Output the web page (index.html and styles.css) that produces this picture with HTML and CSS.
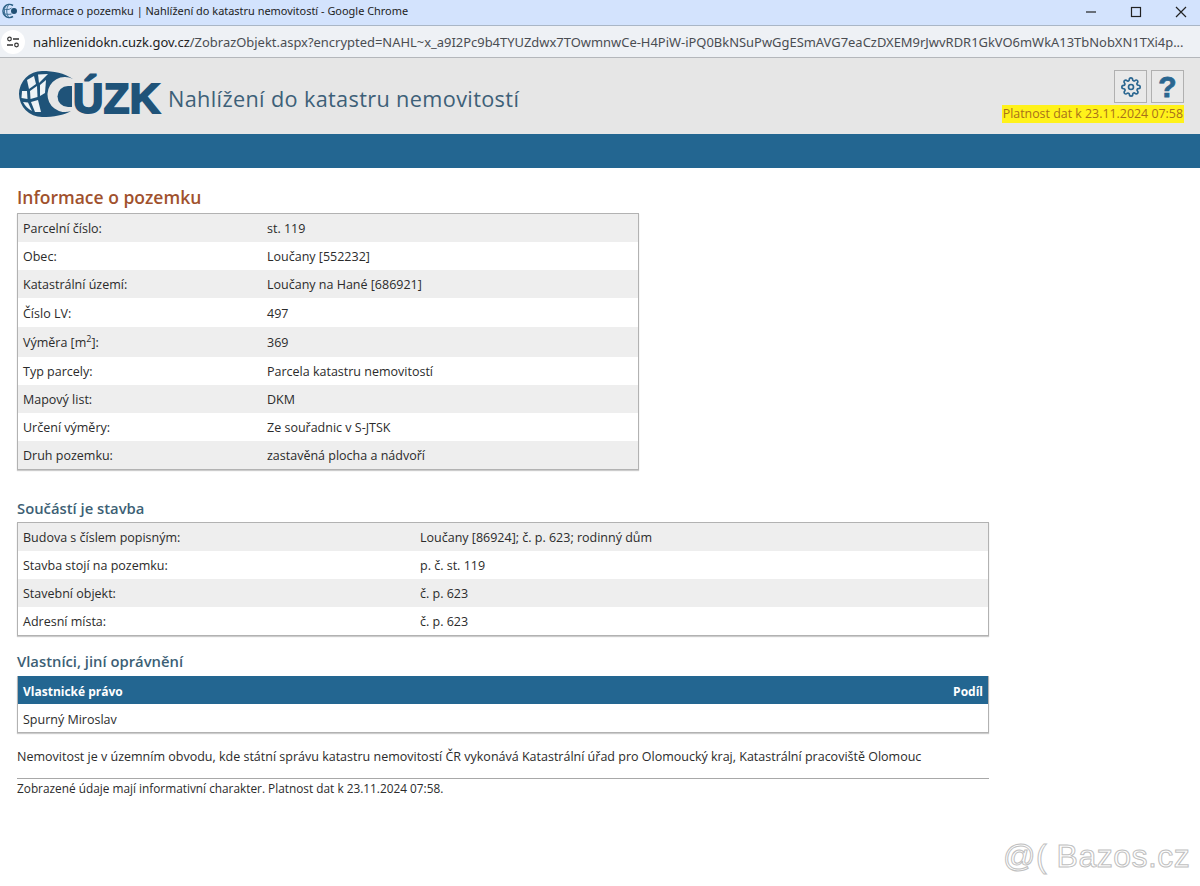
FILE: index.html
```html
<!DOCTYPE html>
<html lang="cs">
<head>
<meta charset="utf-8">
<title>Informace o pozemku</title>
<link rel="stylesheet" href="styles.css">
</head>
<body>
<div class="titlebar">
  <svg class="favicon" viewBox="0 0 16 16" width="16" height="16"><path d="M11 2.500A6.500 6.500 0 1 0 11 13.500" fill="none" stroke="#2a5f85" stroke-width="1.600"/><path d="M1.500 6c3 1 6 .8 8-1M1.500 10.500c3 1 6 1 8 .5M7 1.500c-3 3-3 10 0 13M3.500 3c-1.500 3-1.500 7 0 10" fill="none" stroke="#3f7195" stroke-width="1"/><circle cx="12" cy="8" r="3" fill="#1f4f74"/></svg>
  <span class="wintitle">Informace o pozemku | Nahlížení do katastru nemovitostí - Google Chrome</span>
  <div class="winbtns">
    <svg width="12" height="12" viewBox="0 0 12 12"><path d="M1 6h10" stroke="#222" stroke-width="1.200"/></svg>
    <svg width="12" height="12" viewBox="0 0 12 12"><rect x="1.500" y="1.500" width="9" height="9" fill="none" stroke="#222" stroke-width="1.200"/></svg>
    <svg width="12" height="12" viewBox="0 0 12 12"><path d="M1 1l10 10M11 1L1 11" stroke="#222" stroke-width="1.200"/></svg>
  </div>
</div>
<div class="addressbar">
  <span class="tune"><svg width="14" height="12" viewBox="0 0 14 12"><circle cx="3.500" cy="3" r="1.800" fill="none" stroke="#333" stroke-width="1.200"/><path d="M7 3h6M1 9h6" stroke="#333" stroke-width="1.300"/><circle cx="10.500" cy="9" r="1.800" fill="none" stroke="#333" stroke-width="1.200"/></svg></span>
  <span class="url"><span class="host">nahlizenidokn.cuzk.gov.cz</span>/ZobrazObjekt.aspx?encrypted=NAHL~x_a9I2Pc9b4TYUZdwx7TOwmnwCe-H4PiW-iPQ0BkNSuPwGgESmAVG7eaCzDXEM9rJwvRDR1GkVO6mWkA13TbNobXN1TXi4p...</span>
</div>
<header class="sitehead">
  <div class="logo">
    <svg class="globe" viewBox="0 0 56 48" width="56" height="48">
      <path d="M55 8C46 2 36 0 24 0A23 23 0 1 0 24 46C36 46 46 44 53 40A17.500 17.500 0 1 1 55 8Z" fill="#1f5379"/>
      <path d="M54 15H50A10.500 10.500 0 0 0 50 36H54Z" fill="#1f5379"/>
      <g fill="#eef3f6">
        <path d="M9 9L16 5 18 13 11 18Z"/>
        <path d="M20 3.500L30 3 24 9 21 12Z"/>
        <path d="M4 20L9 20 9.500 28 3.500 27Z"/>
        <path d="M12 20L19 15 19.500 26 12.500 28Z"/>
        <path d="M22 14L28 9 27 22 22 25Z"/>
        <path d="M5 31L10 31.500 14 40C10 38 7 35 5 31Z"/>
        <path d="M13 31L20 29 23 41 17 41Z"/>
      </g>
    </svg>
    <span class="logotext">ÚZK</span>
  </div>
  <h1 class="apptitle">Nahlížení do katastru nemovitostí</h1>
  <div class="headright">
    <div class="iconbtns">
      <span class="iconbtn"><svg width="20" height="20" viewBox="0 0 24 24" fill="none" stroke="#2a6690" stroke-width="2" stroke-linejoin="round"><circle cx="12" cy="12" r="3"/><path d="M19.400 15a1.650 1.650 0 0 0 .33 1.820l.06.06a2 2 0 1 1-2.830 2.830l-.06-.06a1.650 1.650 0 0 0-2.820 1.170V21a2 2 0 1 1-4 0v-.09a1.650 1.650 0 0 0-2.820-1.170l-.06.06a2 2 0 1 1-2.830-2.830l.06-.06a1.650 1.650 0 0 0-1.170-2.820H3a2 2 0 1 1 0-4h.09a1.650 1.650 0 0 0 1.170-2.820l-.06-.06a2 2 0 1 1 2.830-2.830l.06.06a1.650 1.650 0 0 0 2.820-1.170V3a2 2 0 1 1 4 0v.09a1.650 1.650 0 0 0 2.820 1.170l.06-.06a2 2 0 1 1 2.830 2.830l-.06.06a1.650 1.650 0 0 0 1.170 2.820H21a2 2 0 1 1 0 4h-.09a1.650 1.650 0 0 0-1.510 1z"/></svg></span>
      <span class="iconbtn help">?</span>
    </div>
    <span class="validity">Platnost dat k 23.11.2024 07:58</span>
  </div>
</header>
<div class="bluebar"></div>
<main class="content">
  <h2 class="h-main">Informace o pozemku</h2>
  <table class="tbl tbl-land">
    <tr><td class="c1">Parcelní číslo:</td><td>st. 119</td></tr>
    <tr><td class="c1">Obec:</td><td>Loučany [552232]</td></tr>
    <tr><td class="c1">Katastrální území:</td><td>Loučany na Hané [686921]</td></tr>
    <tr class="mid"><td class="c1">Číslo LV:</td><td>497</td></tr>
    <tr class="tall"><td class="c1">Výměra [m<sup>2</sup>]:</td><td>369</td></tr>
    <tr><td class="c1">Typ parcely:</td><td>Parcela katastru nemovitostí</td></tr>
    <tr><td class="c1">Mapový list:</td><td>DKM</td></tr>
    <tr><td class="c1">Určení výměry:</td><td>Ze souřadnic v S-JTSK</td></tr>
    <tr><td class="c1">Druh pozemku:</td><td>zastavěná plocha a nádvoří</td></tr>
  </table>
  <h3 class="h-sub first">Součástí je stavba</h3>
  <table class="tbl tbl-wide">
    <tr><td class="c2">Budova s číslem popisným:</td><td>Loučany [86924]; č. p. 623; rodinný dům</td></tr>
    <tr><td class="c2">Stavba stojí na pozemku:</td><td>p. č. st. 119</td></tr>
    <tr><td class="c2">Stavební objekt:</td><td>č. p. 623</td></tr>
    <tr><td class="c2">Adresní místa:</td><td>č. p. 623</td></tr>
  </table>
  <h3 class="h-sub second">Vlastníci, jiní oprávnění</h3>
  <table class="tbl tbl-wide tbl-owner">
    <tr><th>Vlastnické právo</th><th class="right">Podíl</th></tr>
    <tr><td>Spurný Miroslav</td><td></td></tr>
  </table>
  <p class="note">Nemovitost je v územním obvodu, kde státní správu katastru nemovitostí ČR vykonává Katastrální úřad pro Olomoucký kraj, Katastrální pracoviště Olomouc</p>
  <p class="foot">Zobrazené údaje mají informativní charakter. Platnost dat k 23.11.2024 07:58.</p>
</main>
<div class="watermark">@( Bazos.cz</div>
</body>
</html>
```
FILE: styles.css
```css
* { box-sizing: border-box; }
html, body { margin: 0; padding: 0; }
body { width: 1200px; height: 886px; overflow: hidden; background: #fff; color: #2b2b2b; font-family: "Open Sans", "Liberation Sans", sans-serif; font-size: 12.5px; position: relative; }
.titlebar { height: 26px; background: #d3e3fd; border-bottom: 1px solid #a9b6c6; display: flex; align-items: center; padding: 0 0 4px 2px; }
.favicon { margin-right: 3px; flex: none; }
.wintitle { font-size: 10.950px; color: #222; font-family: "Noto Sans", sans-serif; }
.winbtns { margin-left: auto; display: flex; gap: 33px; padding: 2px 13px 0 0; }
.addressbar { height: 32px; background: #eef1f5; border-bottom: 1px solid #b4b7bb; display: flex; align-items: center; padding-left: 1px; }
.tune { width: 24px; height: 24px; border-radius: 50%; background: #fff; display: flex; align-items: center; justify-content: center; margin-right: 8px; flex: none; }
.url { font-size: 12.950px; color: #4a4d52; white-space: nowrap; font-family: "Noto Sans", sans-serif; }
.host { color: #222; }
.sitehead { height: 76px; background: #e6e6e6; display: flex; align-items: flex-start; padding-left: 18px; }
.logo { display: flex; align-items: flex-start; margin-top: 13px; width: 150px; flex: none; }
.logotext { font-family: "Liberation Sans", sans-serif; font-weight: 700; font-size: 42px; color: #1f5379; letter-spacing: 0.4px; margin-left: -1px; -webkit-text-stroke: 2px #1f5379; line-height: 52px; margin-top: 2px; }
.apptitle { font-weight: 400; font-size: 21.700px; color: #3d6078; margin: 26px 0 0 0; letter-spacing: 0.35px; line-height: 30px; }
.headright { margin-left: auto; display: flex; flex-direction: column; align-items: flex-end; padding: 12px 16px 0 0; }
.iconbtns { display: flex; gap: 4px; }
.iconbtn { width: 33px; height: 33px; border: 1px solid #b0b0b0; background: #e9e9e9; display: flex; align-items: center; justify-content: center; }
.help { font-family: "Liberation Sans", sans-serif; font-weight: 700; font-size: 30px; color: #2a6690; -webkit-text-stroke: 0.8px #2a6690; }
.validity { background: #fff21a; color: #a8701a; padding: 0 1px; margin-top: 2px; line-height: 18px; font-size: 12.400px; }
.bluebar { height: 34px; background: #236691; }
.content { width: 989px; padding: 0 0 0 17px; }
.h-main { font-size: 17.500px; font-weight: 600; color: #a0512d; margin: 17px 0 0; line-height: 24px; height: 28px; }
.h-sub { font-size: 14.800px; font-weight: 600; color: #3d5f75; margin: 16px 0 0; line-height: 20px; height: 24px; }
.h-sub.first { margin-top: 28px; }
.h-sub.second { margin-top: 15px; height: 25px; }
.tbl { border-collapse: separate; border-spacing: 0; border: 1px solid #b2b2b2; box-shadow: 0 1px 1px #ccc; }
.tbl td, .tbl th { height: 28px; padding: 2px 5px 0; text-align: left; font-weight: 400; line-height: 16px; }
.tbl tr:nth-child(odd) td { background: #eeeeee; }
.tbl tr.mid td { height: 29px; }
.tbl tr.tall td { height: 30px; }
.tbl sup { font-size: 9px; line-height: 0; }
.tbl-land { width: 622px; }
.c1 { width: 244px; }
.tbl-wide { width: 972px; }
.c2 { width: 397px; }
.tbl-owner { border-top: none; }
.tbl-owner td, .tbl-owner th { padding-top: 4px; }
.tbl-owner th { background: #236691; color: #fff; font-weight: 700; font-size: 12px; }
.tbl-owner th.right { text-align: right; }
.tbl-owner tr:nth-child(odd) td { background: #fff; }
.note { margin: 16px 0 0; line-height: 16px; }
.foot { margin: 13px 0 0; border-top: 1px solid #a8a8a8; padding-top: 1px; line-height: 17px; width: 972px; font-size: 11.830px; }
.watermark { position: absolute; left: 1003px; top: 838px; font-family: "Liberation Sans", sans-serif; font-size: 32px; color: #fff; -webkit-text-stroke: 1px #c0c0c0; letter-spacing: 0.5px; white-space: nowrap; }
```
